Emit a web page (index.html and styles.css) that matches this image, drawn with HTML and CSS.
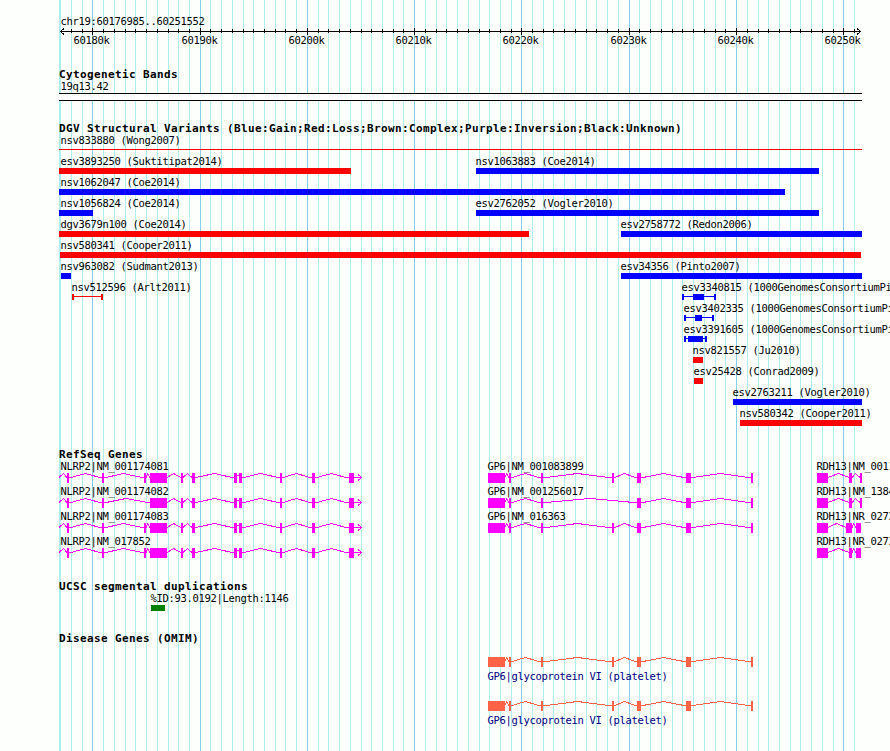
FILE: index.html
```
<!DOCTYPE html>
<html lang="en">
<head>
<meta charset="utf-8">
<title>chr19:60176985..60251552</title>
<link rel="stylesheet" href="styles.css">
</head>
<body>
<main class="browser">
<svg class="grid" viewBox="0 0 890 751" aria-hidden="true">
  <path class="minor" d="M59.5 0V751M60.5 0V751M71.5 0V751M82.5 0V751M103.5 0V751M114.5 0V751M125.5 0V751M135.5 0V751M146.5 0V751M157.5 0V751M168.5 0V751M178.5 0V751M189.5 0V751M210.5 0V751M221.5 0V751M232.5 0V751M243.5 0V751M253.5 0V751M264.5 0V751M275.5 0V751M285.5 0V751M296.5 0V751M318.5 0V751M328.5 0V751M339.5 0V751M350.5 0V751M361.5 0V751M371.5 0V751M382.5 0V751M393.5 0V751M403.5 0V751M425.5 0V751M436.5 0V751M446.5 0V751M457.5 0V751M468.5 0V751M479.5 0V751M489.5 0V751M500.5 0V751M511.5 0V751M532.5 0V751M543.5 0V751M553.5 0V751M564.5 0V751M575.5 0V751M586.5 0V751M596.5 0V751M607.5 0V751M618.5 0V751M639.5 0V751M650.5 0V751M661.5 0V751M672.5 0V751M682.5 0V751M693.5 0V751M704.5 0V751M715.5 0V751M725.5 0V751M747.5 0V751M758.5 0V751M768.5 0V751M779.5 0V751M790.5 0V751M800.5 0V751M811.5 0V751M822.5 0V751M833.5 0V751M854.5 0V751"/>
  <path class="major" d="M92.5 0V751M200.5 0V751M307.5 0V751M414.5 0V751M521.5 0V751M629.5 0V751M736.5 0V751M843.5 0V751"/>
</svg>

<section>
<svg class="track ruler" viewBox="0 0 890 66" height="66">
  <text x="60" y="25">chr19:60176985..60251552</text>
  <path class="axis" d="M60 31.5H861M64 28.5L60.5 31.5L64 34.5M857 28.5L860.5 31.5L857 34.5"/>
  <path class="axis" d="M71.5 29V33M82.5 29V33M103.5 29V33M114.5 29V33M125.5 29V33M135.5 29V33M146.5 29V33M157.5 29V33M168.5 29V33M178.5 29V33M189.5 29V33M210.5 29V33M221.5 29V33M232.5 29V33M243.5 29V33M253.5 29V33M264.5 29V33M275.5 29V33M285.5 29V33M296.5 29V33M318.5 29V33M328.5 29V33M339.5 29V33M350.5 29V33M361.5 29V33M371.5 29V33M382.5 29V33M393.5 29V33M403.5 29V33M425.5 29V33M436.5 29V33M446.5 29V33M457.5 29V33M468.5 29V33M479.5 29V33M489.5 29V33M500.5 29V33M511.5 29V33M532.5 29V33M543.5 29V33M553.5 29V33M564.5 29V33M575.5 29V33M586.5 29V33M596.5 29V33M607.5 29V33M618.5 29V33M639.5 29V33M650.5 29V33M661.5 29V33M672.5 29V33M682.5 29V33M693.5 29V33M704.5 29V33M715.5 29V33M725.5 29V33M747.5 29V33M758.5 29V33M768.5 29V33M779.5 29V33M790.5 29V33M800.5 29V33M811.5 29V33M822.5 29V33M833.5 29V33M854.5 29V33"/>
  <path class="axis" d="M92.5 28V35M200.5 28V35M307.5 28V35M414.5 28V35M521.5 28V35M629.5 28V35M736.5 28V35M843.5 28V35"/>
  <text x="73" y="44">60180k</text><text x="181" y="44">60190k</text><text x="288" y="44">60200k</text><text x="395" y="44">60210k</text>
  <text x="502" y="44">60220k</text><text x="610" y="44">60230k</text><text x="717" y="44">60240k</text><text x="824" y="44">60250k</text>
</svg>
</section>

<section>
<h2>Cytogenetic Bands</h2>
<svg class="track" viewBox="0 82 890 38" height="38">
  <text x="60" y="90">19q13.42</text>
  <rect class="band" x="59" y="93" width="803" height="8"/>
  <path class="axis" d="M59 93.5H862M59 100.5H862"/>
</svg>
</section>

<section>
<h2>DGV Structural Variants (Blue:Gain;Red:Loss;Brown:Complex;Purple:Inversion;Black:Unknown)</h2>
<svg class="track" viewBox="0 136 890 310" height="310">
  <text x="60" y="144">nsv833880 (Wong2007)</text><rect class="loss" x="59" y="149" width="803" height="1"/>
  <text x="60" y="165">esv3893250 (Suktitipat2014)</text><rect class="loss" x="59" y="168" width="292" height="6"/>
  <text x="475" y="165">nsv1063883 (Coe2014)</text><rect class="gain" x="476" y="168" width="343" height="6"/>
  <text x="60" y="186">nsv1062047 (Coe2014)</text><rect class="gain" x="59" y="189" width="726" height="6"/>
  <text x="60" y="207">nsv1056824 (Coe2014)</text><rect class="gain" x="59" y="210" width="34" height="6"/>
  <text x="475" y="207">esv2762052 (Vogler2010)</text><rect class="gain" x="476" y="210" width="343" height="6"/>
  <text x="60" y="228">dgv3679n100 (Coe2014)</text><rect class="loss" x="59" y="231" width="470" height="6"/>
  <text x="620" y="228">esv2758772 (Redon2006)</text><rect class="gain" x="621" y="231" width="241" height="6"/>
  <text x="60" y="249">nsv580341 (Cooper2011)</text><rect class="loss" x="60" y="252" width="801" height="6"/>
  <text x="60" y="270">nsv963082 (Sudmant2013)</text><rect class="gain" x="61" y="273" width="10" height="6"/>
  <text x="620" y="270">esv34356 (Pinto2007)</text><rect class="gain" x="621" y="273" width="241" height="6"/>
  <text x="71" y="291">nsv512596 (Arlt2011)</text><path class="loss" d="M72 294h2v2h27v-2h2v6h-2v-3h-27v3h-2z"/>
  <text x="681" y="291">esv3340815 (1000GenomesConsortiumPi</text><path class="gain" d="M682 294h2v2h9v-2h11v2h10v-2h2v6h-2v-3h-10v3h-11v-3h-9v3h-2z"/>
  <text x="683" y="312">esv3402335 (1000GenomesConsortiumPi</text><path class="gain" d="M684 315h2v2h9v-2h7v2h10v-2h2v6h-2v-3h-10v3h-7v-3h-9v3h-2z"/>
  <text x="683" y="333">esv3391605 (1000GenomesConsortiumPi</text><path class="gain" d="M684 336h2v2h2v-2h15v2h2v-2h2v6h-2v-3h-2v3h-15v-3h-2v3h-2z"/>
  <text x="692" y="354">nsv821557 (Ju2010)</text><rect class="loss" x="693" y="357" width="10" height="6"/>
  <text x="693" y="375">esv25428 (Conrad2009)</text><rect class="loss" x="694" y="378" width="9" height="6"/>
  <text x="732" y="396">esv2763211 (Vogler2010)</text><rect class="gain" x="733" y="399" width="129" height="6"/>
  <text x="739" y="417">nsv580342 (Cooper2011)</text><rect class="loss" x="740" y="420" width="122" height="6"/>
</svg>
</section>

<section>
<h2>RefSeq Genes</h2>
<svg class="track" viewBox="0 462 890 116" height="116">
  <defs>
    <g id="nlrp2-tail">
      <path class="exon" d="M67 0h2v10h-2zM102 0h2v10h-2zM150 0h17v10h-17zM181 0h2v10h-2zM192 0h3v10h-3zM234 0h3v10h-3zM239 0h3v10h-3zM280 0h2v10h-2zM312 0h3v10h-3zM349 0h5v10h-5z"/>
      <path class="intron" d="M59 4.5L63.5 .5L67 4.5M69 4.5H71L85.5 .5L100 4.5H102M167 4.5L173.500 .5L181 4.5M183 4.5L187.500 .5L192 4.5M195 4.5H196L214.500 .5L232 4.5H234M237 2.5H239M242 4.5H244L260.500 .5L278 4.5H280M282 4.5H283L296.500 .5L310 4.5H312M315 4.5H317L331.500 .5L346 4.5H349M354 4.500H362M358 1.500L361.500 4.500L358 7.500"/>
    </g>
    <g id="nlrp2-full">
      <use href="#nlrp2-tail"/>
      <path class="exon" d="M144 0h2v10h-2z"/>
      <path class="intron" d="M104 4.5H106L123.500 .5L142 4.5H144M146 4.5L147.500 .5L150 4.5"/>
    </g>
    <g id="nlrp2-short">
      <use href="#nlrp2-tail"/>
      <path class="intron" d="M104 4.5H106L126 .5L148 4.5H150"/>
    </g>
    <g id="gp6-base">
      <path class="exon" d="M488 0h17v10h-17zM509 0h2v10h-2zM541 0h2v10h-2zM637 0h4v10h-4zM686 0h5v10h-5zM751 0h2v10h-2z"/>
      <path class="intron" d="M505 4L506.500 .5L509 4.5M511 4.5H512L525.500 .5L539 4.5H541M641 4.5H643L663.500 .5L684 4.5H686M691 4.5H693L720.500 .5L748 4.5H751"/>
    </g>
    <g id="gp6-full">
      <use href="#gp6-base"/>
      <path class="exon" d="M612 0h2v10h-2z"/>
      <path class="intron" d="M543 4.5H546L577.500 .5L609 4.5H612M614 4.5H615L624.500 .5L635 4.5H637"/>
    </g>
    <g id="gp6-short">
      <use href="#gp6-base"/>
      <path class="intron" d="M543 4.5H546L590 .5L634 4.5H637"/>
    </g>
    <g id="rdh13-coding">
      <path class="exon" d="M817 0h11v10h-11zM849 0h3v10h-3zM860 0h2v10h-2z"/>
      <path class="intron" d="M828 4.5L838.500 .5L849 4.5M852 4.5L855.500 .5L860 4.5"/>
    </g>
  </defs>
  <g class="refseq">
    <use href="#nlrp2-full" y="473"/><use href="#gp6-full" y="473"/><use href="#rdh13-coding" y="473"/>
    <use href="#nlrp2-short" y="498"/><use href="#gp6-short" y="498"/><use href="#rdh13-coding" y="498"/>
    <use href="#nlrp2-full" y="523"/><use href="#gp6-full" y="523"/>
    <path class="exon" d="M817 523h11v10h-11zM846 523h6v10h-6zM856 523h5v10h-5z"/>
    <path class="intron" d="M828 527.5L836.5 523.5L846 527.500M852 527.5L853.5 523.5L856 527.5"/>
    <use href="#nlrp2-full" y="548"/>
    <path class="exon" d="M817 548h11v10h-11zM849 548h3v10h-3zM856 548h5v10h-5z"/>
    <path class="intron" d="M828 552.5L838.5 548.5L849 552.5M852 552.5L853.5 548.5L856 552.5"/>
  </g>
  <text x="60" y="470">NLRP2|NM_001174081</text><text x="487" y="470">GP6|NM_001083899</text><text x="816" y="470">RDH13|NM_0011</text>
  <text x="60" y="495">NLRP2|NM_001174082</text><text x="487" y="495">GP6|NM_001256017</text><text x="816" y="495">RDH13|NM_1384</text>
  <text x="60" y="520">NLRP2|NM_001174083</text><text x="487" y="520">GP6|NM_016363</text><text x="816" y="520">RDH13|NR_0273</text>
  <text x="60" y="545">NLRP2|NM_017852</text><text x="816" y="545">RDH13|NR_0273</text>
</svg>
</section>

<section>
<h2>UCSC segmental duplications</h2>
<svg class="track" viewBox="0 594 890 36" height="36">
  <text x="150" y="602">%ID:93.0192|Length:1146</text>
  <rect class="duplication" x="151" y="605" width="14" height="6"/>
</svg>
</section>

<section>
<h2>Disease Genes (OMIM)</h2>
<svg class="track omim" viewBox="0 646 890 105" height="105">
  <use href="#gp6-full" y="657"/><text x="487" y="680">GP6|glycoprotein VI (platelet)</text>
  <use href="#gp6-full" y="701"/><text x="487" y="724">GP6|glycoprotein VI (platelet)</text>
</svg>
</section>
</main>
</body>
</html>
```
FILE: styles.css
```
body {
  margin: 0;
  background: #fdfffc;
}

.browser {
  position: relative;
  width: 890px;
  height: 751px;
  overflow: hidden;
  font-family: "DejaVu Sans Mono", "Liberation Mono", monospace;
  color: #000;
}

.grid {
  position: absolute;
  inset: 0;
  width: 890px;
  height: 751px;
}

.minor,
.major,
.axis,
.intron {
  fill: none;
  stroke-width: 1;
  shape-rendering: crispEdges;
}

.minor { stroke: #afeeee; }
.major { stroke: #87ceeb; }
.axis { stroke: #000; }

section { position: relative; }

h2 {
  height: 16px;
  margin: 0;
  padding-left: 59px;
  font-size: 11px;
  font-weight: 700;
  line-height: 18px;
  letter-spacing: 0.378px;
  white-space: nowrap;
}

.track {
  display: block;
  width: 890px;
  overflow: visible;
  color: #f0f;
}

.track text {
  font-size: 10.5px;
  letter-spacing: -0.322px;
  fill: #000;
  white-space: pre;
  transform: translateX(0.5px);
}

.band { fill: #fff; }
.gain { fill: #00f; }
.loss { fill: #f00; }
.duplication { fill: #008000; }

.gain,
.loss { shape-rendering: crispEdges; }

.exon { fill: currentColor; }
.intron { stroke: currentColor; }

.omim { color: tomato; }
.omim text { fill: #000080; }
```
